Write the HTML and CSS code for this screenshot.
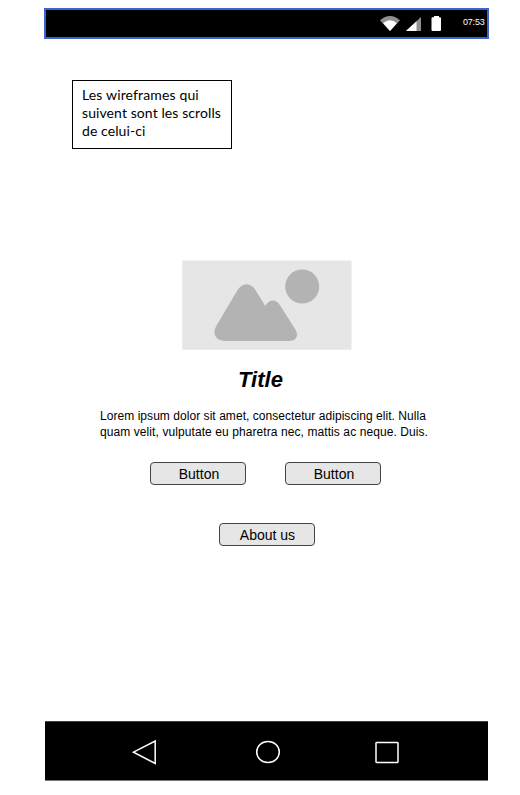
FILE: index.html
```html
<!DOCTYPE html>
<html lang="fr">
<head>
<meta charset="utf-8">
<title>Wireframe</title>
<link rel="stylesheet" href="styles.css">
</head>
<body>
<div class="phone">
  <header class="status">
    <svg class="status-icons" width="64" height="18" viewBox="0 0 64 18">
      <path d="M0 5.3Q10 -3.4 20 5.3L10 16Z" fill="#909090"/>
      <path d="M3.1 8.3Q10 2.4 16.900 8.300L10 16Z" fill="#fff"/>
      <path d="M41 2V16H26Z" fill="#909090"/>
      <path d="M36.500 6.200V16H26Z" fill="#fff"/>
      <path d="M54 1h5v1.200h1q1 0 1 1V15q0 1-1 1h-7.500q-1 0-1-1V3.200q0-1 1-1H54Z" fill="#fff"/>
    </svg>
    <span class="time">07:53</span>
  </header>
  <main>
    <p class="note"><span class="n1">Les wireframes qui</span><br><span class="n2">suivent sont les scrolls</span><br><span class="n2">de celui-ci</span></p>
    <svg class="picture" width="170" height="90" viewBox="0 0 170 90">
      <path d="M.3 .5H169.500V89.700H.3Z" fill="#e6e6e6"/>
      <circle cx="120.200" cy="26.500" r="17" fill="#b3b3b3"/>
      <path d="M34.500 75.500L55 41C60 32 69 32 74 41L83.300 56C87 49 94 48.500 98.500 56L113 79C117 85 115 91 107 91H44C33 91 30 83.500 34.500 75.500Z" transform="translate(0 -10)" fill="#b3b3b3"/>
    </svg>
    <h1>Title</h1>
    <p class="lorem"><span class="l1">Lorem ipsum dolor sit amet, consectetur adipiscing elit. Nulla</span><br><span class="l2">quam velit, vulputate eu pharetra nec, mattis ac neque. Duis.</span></p>
    <div class="actions"><button>Button</button><button>Button</button></div>
    <button class="about">About us</button>
  </main>
  <nav>
    <svg width="26" height="28" viewBox="0 0 26 28"><path d="M2.500 14.200L24.200 3V25.500Z"/></svg>
    <svg width="26" height="28" viewBox="0 0 26 28"><ellipse cx="13" cy="14" rx="11.300" ry="10.500"/></svg>
    <svg class="recent" width="26" height="28" viewBox="0 0 26 28"><rect x="2" y="4.500" width="22" height="20" rx=".7"/></svg>
  </nav>
</div>
</body>
</html>
```
FILE: styles.css
```css
* { box-sizing: border-box; }
body { margin: 0; background: #fff; color: #000; font-family: "Liberation Sans", Arial, sans-serif; }
.phone { width: 445px; height: 773px; margin: 8px 0 0 44px; display: flex; flex-direction: column; }
.status { height: 31px; flex: none; background: #000; border: 2px solid #3b63d3; display: flex; justify-content: flex-end; padding: 5px 2px 0 0; }
.status-icons { margin-right: 19px; }
.time { color: #fff; font-size: 9px; line-height: 14px; letter-spacing: -.2px; width: 22px; white-space: nowrap; }
main { flex: 1; display: flex; flex-direction: column; align-items: center; }
.note { align-self: flex-start; width: 160px; height: 69px; margin: 41px 0 0 28px; border: 1px solid #000; padding: 5px 9px; font: 14px/18px Lato, sans-serif; white-space: nowrap; }
.n1 { letter-spacing: .14px; }
.n2 { letter-spacing: .09px; }
.picture { margin: 111px 0 0; }
h1 { font-size: 22px; line-height: 26px; font-style: italic; margin: 17px 0 0; transform: translateX(-6px); }
.lorem { font-size: 12px; line-height: 16px; margin: 15px 0 0; align-self: flex-start; padding-left: 56px; white-space: nowrap; }
.l1 { letter-spacing: .05px; }
.l2 { letter-spacing: .085px; }
.actions { display: flex; gap: 39px; margin: 22px 2px 0 0; }
button { width: 96px; height: 23px; padding: 0 0 0 2px; border: 1px solid #444; border-radius: 4px; background: #e6e6e6; color: #000; font: 14px/20px "Liberation Sans", Arial, sans-serif; }
.about { margin-top: 38px; }
nav { height: 60px; flex: none; width: 443px; margin-left: 1px; background: #000; border-top: 1px solid #444; border-bottom: 1px solid #777; display: flex; gap: 98px; align-items: center; padding: 2px 0 0 86px; }
nav svg { fill: none; stroke: #fff; stroke-width: 1.5; }
nav .recent { margin-left: -5px; }
```
